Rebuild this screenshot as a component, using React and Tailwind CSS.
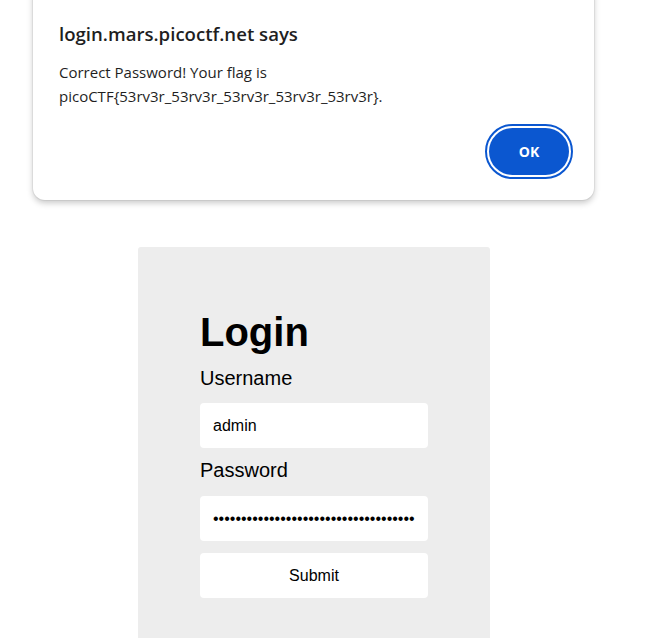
export default function App() {
  return (
    <div className="min-h-[638px] overflow-hidden bg-white">
      <div className="pl-[33px]">
        <div
          className="-mt-4 w-[561px] rounded-[12px] bg-white pt-[38px] pr-[25px] pb-[25px] pl-[26px] shadow-[0_0_0_1px_rgba(0,0,0,0.05),0_3px_6px_rgba(0,0,0,0.22)]"
          style={{ fontFamily: '"Open Sans", "Noto Sans", sans-serif' }}
        >
          <h2 className="text-[18.6px] leading-[24px] font-semibold text-[#1f1f1f]">login.mars.picoctf.net says</h2>
          <p className="mt-[14px] text-[15px] leading-[24px] text-[#1f1f1f]">
            Correct Password! Your flag is
            <br />
            picoCTF{"{"}53rv3r_53rv3r_53rv3r_53rv3r_53rv3r{"}"}.
          </p>
          <div className="mt-[20px] flex justify-end">
            <button className="h-[47px] w-[80px] rounded-full bg-[#0b57d0] text-[14px] font-bold text-white outline-2 outline-offset-2 outline-[#0b57d0] outline-solid">
              OK
            </button>
          </div>
        </div>
      </div>

      <div className="mt-[47px] pl-[138px]">
        <div
          className="w-[352px] rounded-t-[3px] bg-[#ededed] pt-[62px] pb-[60px] pl-[62px]"
          style={{ fontFamily: '"Liberation Sans", Arial, sans-serif' }}
        >
          <h1 className="text-[40px] leading-[46px] font-bold text-black">Login</h1>
          <label className="mt-[12px] block text-[20px] leading-[23px] text-black">Username</label>
          <input
            readOnly
            value="admin"
            className="mt-[13px] block h-[45px] w-[228px] rounded-[4px] bg-white pl-[13px] text-[16px] text-black outline-none"
          />
          <label className="mt-[11px] block text-[20px] leading-[23px] text-black">Password</label>
          <input
            readOnly
            type="password"
            value="53rv3r53rv3r53rv3r53rv3r53rv3r53rv3r"
            className="mt-[14px] block h-[45px] w-[228px] rounded-[4px] bg-white pl-[13px] text-[16px] text-black outline-none"
          />
          <button className="mt-[12px] block h-[45px] w-[228px] rounded-[4px] bg-white text-[16px] text-black">
            Submit
          </button>
        </div>
      </div>
    </div>
  );
}
